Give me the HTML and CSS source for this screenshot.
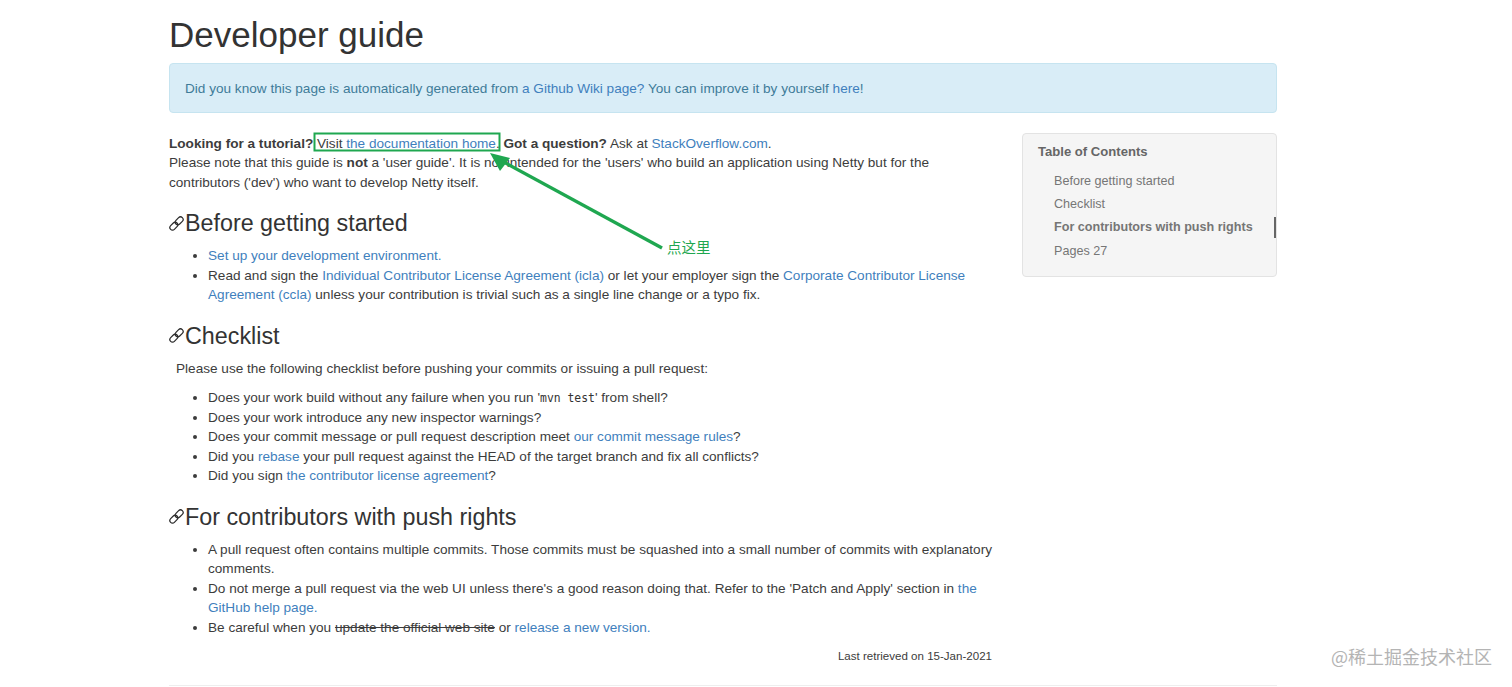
FILE: index.html
```html
<!DOCTYPE html>
<html lang="en">
<head>
<meta charset="utf-8">
<title>Developer guide</title>
<link rel="stylesheet" href="styles.css">
</head>
<body>
<svg width="0" height="0" class="defs" aria-hidden="true">
  <symbol id="chain" viewBox="0 0 16 16">
    <g fill="none" stroke="#2a2a2a" stroke-width="1.3" transform="rotate(-45 8 8)">
      <rect x="-0.8" y="5.2" width="9.6" height="5.6" rx="2.8"/>
      <rect x="7.2" y="5.2" width="9.6" height="5.6" rx="2.8"/>
    </g>
  </symbol>
</svg>
<div class="container">
  <h1 class="title">Developer guide</h1>
  <div class="alert">Did you know this page is automatically generated from <a href="#">a Github Wiki page?</a> You can improve it by yourself <a href="#">here</a>!</div>
  <div class="columns">
    <main class="main">
      <p><b>Looking for a tutorial?</b> Visit <a href="#">the documentation home</a>. <b>Got a question?</b> Ask at <a href="#">StackOverflow.com</a>.<br>Please note that this guide is <b>not</b> a 'user guide'. It is not intended for the 'users' who build an application using Netty but for the contributors ('dev') who want to develop Netty itself.</p>
      <h2><svg class="chain"><use href="#chain"/></svg>Before getting started</h2>
      <ul>
        <li><a href="#">Set up your development environment.</a></li>
        <li>Read and sign the <a href="#">Individual Contributor License Agreement (icla)</a> or let your employer sign the <a href="#">Corporate Contributor License Agreement (ccla)</a> unless your contribution is trivial such as a single line change or a typo fix.</li>
      </ul>
      <h2><svg class="chain"><use href="#chain"/></svg>Checklist</h2>
      <p class="indent">Please use the following checklist before pushing your commits or issuing a pull request:</p>
      <ul>
        <li>Does your work build without any failure when you run '<code>mvn test</code>' from shell?</li>
        <li>Does your work introduce any new inspector warnings?</li>
        <li>Does your commit message or pull request description meet <a href="#">our commit message rules</a>?</li>
        <li>Did you <a href="#">rebase</a> your pull request against the HEAD of the target branch and fix all conflicts?</li>
        <li>Did you sign <a href="#">the contributor license agreement</a>?</li>
      </ul>
      <h2><svg class="chain"><use href="#chain"/></svg>For contributors with push rights</h2>
      <ul>
        <li>A pull request often contains multiple commits. Those commits must be squashed into a small number of commits with explanatory comments.</li>
        <li>Do not merge a pull request via the web UI unless there's a good reason doing that. Refer to the 'Patch and Apply' section in <a href="#">the GitHub help page.</a></li>
        <li>Be careful when you <s>update the official web site</s> or <a href="#">release a new version.</a></li>
      </ul>
      <div class="retrieved">Last retrieved on 15-Jan-2021</div>
    </main>
    <aside class="toc">
      <div class="toc-title">Table of Contents</div>
      <a class="toc-item" href="#">Before getting started</a>
      <a class="toc-item" href="#">Checklist</a>
      <a class="toc-item active" href="#">For contributors with push rights</a>
      <a class="toc-item" href="#">Pages 27</a>
    </aside>
  </div>
  <hr class="rule">
</div>
<svg class="annotation" width="1512" height="687" aria-hidden="true">
  <rect x="314.5" y="133.5" width="185" height="17" fill="none" stroke="#1fa750" stroke-width="2"/>
  <path d="M662 248 L500 160" stroke="#1fa750" stroke-width="3.4" fill="none"/>
  <path d="M490 153 L510 158 L500 171 Z" fill="#1fa750"/>
</svg>
<div class="note">点这里</div>
<div class="watermark">@稀土掘金技术社区</div>
</body>
</html>
```
FILE: styles.css
```css
html, body { margin: 0; padding: 0; height: 687px; overflow: hidden; background: #fff; }
body {
  font-family: "Liberation Sans", Arial, sans-serif;
  font-size: 13.6px;
  line-height: 19.5px;
  color: #3c3c3c;
  position: relative;
}
.defs { position: absolute; }
a { color: #3f7fbd; text-decoration: none; }
.container { width: 1108px; margin-left: 169px; }
.title {
  font-size: 35px;
  font-weight: 500;
  line-height: 38.5px;
  margin: 0;
  padding-top: 16px;
  color: #333;
}
.alert {
  margin-top: 8px;
  height: 50px;
  box-sizing: border-box;
  padding: 15px 15px;
  background: #d9edf7;
  border: 1px solid #c6e4f0;
  border-radius: 4px;
  color: #3f7c99;
}
.columns { display: flex; justify-content: space-between; align-items: flex-start; margin-top: 19px; }
.main { width: 823px; padding-top: 2px; }
.main p { margin: 0; }
.main .indent { padding-left: 7px; margin-bottom: 10px; }
h2 {
  font-size: 23.3px;
  font-weight: 500;
  line-height: 26px;
  margin: 18px 0 10px;
  color: #333;
  display: flex;
  align-items: center;
}
.chain { width: 15px; height: 15px; margin: 0 1px 0 0; flex: none; overflow: visible; }
ul { margin: 0; padding-left: 39px; }
code { font-family: "DejaVu Sans Mono", monospace; font-size: 11.4px; line-height: 1; color: #333; }
.retrieved { font-size: 11.55px; text-align: right; margin-top: 10px; }
.toc {
  width: 255px;
  height: 144px;
  box-sizing: border-box;
  margin-top: 1px;
  padding: 8px 0 0 15px;
  background: #f5f5f5;
  border: 1px solid #e3e3e3;
  border-radius: 4px;
  position: relative;
  font-size: 12.6px;
}
.toc-title { font-weight: bold; color: #666; font-size: 13.1px; line-height: 19px; margin-bottom: 9px; }
.toc-item { display: block; color: #767676; padding-left: 16px; line-height: 23.4px; }
.toc-item.active { font-weight: bold; position: relative; }
.toc-item.active::after {
  content: "";
  position: absolute;
  right: 0;
  top: 1px;
  width: 2px;
  height: 21px;
  background: #666;
}
.rule { border: 0; border-top: 1px solid #eee; margin: 0; position: absolute; left: 169px; top: 685px; width: 1108px; }
.annotation { position: absolute; left: 0; top: 0; pointer-events: none; }
.note {
  position: absolute;
  left: 667px;
  top: 237px;
  font-family: "Noto Sans CJK SC", sans-serif;
  font-size: 14.5px;
  line-height: 20px;
  color: #1fa750;
}
.watermark {
  position: absolute;
  left: 1331px;
  top: 646px;
  font-family: "Noto Sans CJK SC", sans-serif;
  font-size: 18px;
  line-height: 20px;
  color: #b4b4b4;
  white-space: nowrap;
}
```
